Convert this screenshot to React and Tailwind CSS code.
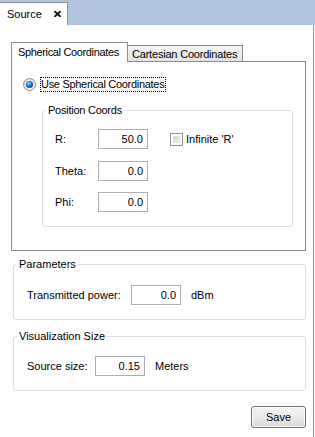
import React from "react";

function Radio() {
  return (
    <svg width="13" height="13" viewBox="0 0 13 13">
      <defs>
        <linearGradient id="rbg" x1="0" y1="0" x2="1" y2="1">
          <stop offset="0" stopColor="#d8d8d8" />
          <stop offset="1" stopColor="#fbfbfb" />
        </linearGradient>
        <radialGradient id="rdot" cx="0.4" cy="0.35" r="0.7">
          <stop offset="0" stopColor="#9fdcfb" />
          <stop offset="0.45" stopColor="#2e84c6" />
          <stop offset="1" stopColor="#0f3f78" />
        </radialGradient>
      </defs>
      <circle cx="6.5" cy="6.5" r="6" fill="url(#rbg)" stroke="#8b8b8b" strokeWidth="1" />
      <circle cx="6.5" cy="6.5" r="3.6" fill="url(#rdot)" />
    </svg>
  );
}

function Checkbox() {
  return (
    <div className="w-[13px] h-[13px] border border-[#8f8f8f] bg-white p-[2px] shrink-0">
      <div className="w-full h-full bg-gradient-to-br from-[#cfcfcf] to-[#f4f4f4] border border-[#e0e0e0]" />
    </div>
  );
}

function Field({ value }) {
  return (
    <div className="w-[50px] h-[20px] border border-[#abadb3] bg-white flex items-center justify-end pr-[4px] shrink-0">
      {value}
    </div>
  );
}

export default function App() {
  return (
    <div className="w-[315px] h-[437px] bg-white font-['Liberation_Sans',Arial,sans-serif] text-[11px] leading-[13px] text-black flex flex-col overflow-hidden">
      <div className="h-[25px] bg-[#b1c5df] flex items-end shrink-0">
        <div className="w-[68px] h-[23px] bg-white border-t border-r border-[#8a8f99] flex items-center pl-[7px]">
          <span>Source</span>
          <svg className="ml-[12px]" width="7" height="6" viewBox="0 0 7 6">
            <path d="M1 0.8 L6 5.2 M6 0.8 L1 5.2" stroke="#111" strokeWidth="1.8" strokeLinecap="square" />
          </svg>
        </div>
      </div>
      <div className="flex-1 w-[314px] border-r border-[#8e9196] pl-[11px] pt-[17px]">
        {/* tab row */}
        <div className="flex items-end h-[19px] w-[295px]">
          <div className="w-[117px] h-[20px] -mb-px relative z-10 bg-white border border-b-0 border-[#898c95] pl-[6px] pt-[3px] tracking-[-0.35px] whitespace-nowrap">
            Spherical Coordinates
          </div>
          <div className="w-[115px] h-[16px] bg-gradient-to-b from-[#f4f4f4] to-[#e3e3e3] border-t border-r border-[#898c95] pl-[4px] pt-[2px] tracking-[-0.2px] whitespace-nowrap">
            Cartesian Coordinates
          </div>
        </div>
        {/* pane */}
        <div className="w-[295px] h-[190px] border border-[#898c95] bg-white">
          <div className="flex items-center h-[15px] mt-[15px] ml-[11px]">
            <Radio />
            <span className="ml-[4px] border border-dotted border-black h-[15px] flex items-center pr-[1px] tracking-[-0.3px] whitespace-nowrap">
              Use Spherical Coordinates
            </span>
          </div>
          <fieldset className="ml-[30px] mt-[12px] w-[251px] border border-[#d5dfe5] rounded-[3px] pl-[12px] pt-[12px] pb-[14px]">
            <legend className="-ml-[9px] px-[2px] leading-[13px] tracking-[-0.25px]">Position Coords</legend>
            <div className="flex items-center h-[20px]">
              <span className="w-[43px]">R:</span>
              <Field value="50.0" />
              <div className="ml-[22px]">
                <Checkbox />
              </div>
              <span className="ml-[3px]">Infinite 'R'</span>
            </div>
            <div className="flex items-center h-[20px] mt-[12px]">
              <span className="w-[43px]">Theta:</span>
              <Field value="0.0" />
            </div>
            <div className="flex items-center h-[20px] mt-[11px]">
              <span className="w-[43px]">Phi:</span>
              <Field value="0.0" />
            </div>
          </fieldset>
        </div>

        <fieldset className="ml-[2px] mt-[7px] w-[293px] border border-[#d5dfe5] rounded-[3px] pl-[13px] pt-[14px] pb-[14px]">
          <legend className="-ml-[10px] px-[2px] leading-[13px]">Parameters</legend>
          <div className="flex items-center h-[20px]">
            <span className="w-[104px]">Transmitted power:</span>
            <Field value="0.0" />
            <span className="ml-[10px]">dBm</span>
          </div>
        </fieldset>

        <fieldset className="ml-[2px] mt-[10px] w-[293px] border border-[#d5dfe5] rounded-[3px] pl-[13px] pt-[13px] pb-[14px]">
          <legend className="-ml-[10px] px-[2px] leading-[13px]">Visualization Size</legend>
          <div className="flex items-center h-[20px]">
            <span className="w-[68px]">Source size:</span>
            <Field value="0.15" />
            <span className="ml-[10px]">Meters</span>
          </div>
        </fieldset>

        <div className="w-[295px] flex justify-end mt-[15px]">
          <div className="w-[55px] h-[22px] rounded-[3px] border border-[#707070] bg-gradient-to-b from-[#f2f2f2] via-[#ebebeb] to-[#d6d6d6] flex items-center justify-center shadow-[inset_0_0_0_1px_#fcfcfc]">
            Save
          </div>
        </div>
      </div>
    </div>
  );
}
